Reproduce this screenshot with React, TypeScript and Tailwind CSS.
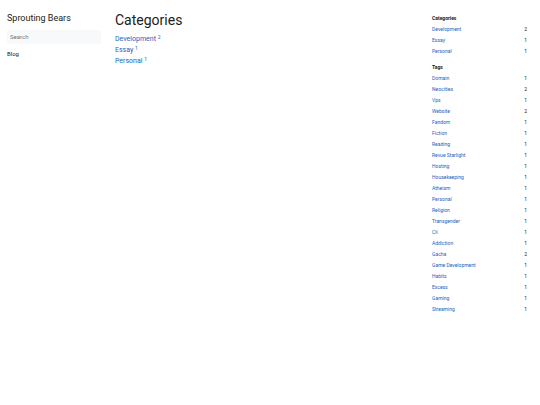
interface Term {
  name: string;
  count: number;
}

const categories: Term[] = [
  { name: "Development", count: 2 },
  { name: "Essay", count: 1 },
  { name: "Personal", count: 1 },
];

const tags: Term[] = [
  { name: "Domain", count: 1 },
  { name: "Neocities", count: 2 },
  { name: "Vps", count: 1 },
  { name: "Website", count: 2 },
  { name: "Fandom", count: 1 },
  { name: "Fiction", count: 1 },
  { name: "Reading", count: 1 },
  { name: "Revue Starlight", count: 1 },
  { name: "Hosting", count: 1 },
  { name: "Housekeeping", count: 1 },
  { name: "Atheism", count: 1 },
  { name: "Personal", count: 1 },
  { name: "Religion", count: 1 },
  { name: "Transgender", count: 1 },
  { name: "Cli", count: 1 },
  { name: "Addiction", count: 1 },
  { name: "Gacha", count: 2 },
  { name: "Game Development", count: 1 },
  { name: "Habits", count: 1 },
  { name: "Excess", count: 1 },
  { name: "Gaming", count: 1 },
  { name: "Streaming", count: 1 },
];

const TermList = ({ title, terms }: { title: string; terms: Term[] }) => (
  <section>
    <h2 className="font-bold">{title}</h2>
    <ul>
      {terms.map((term) => (
        <li key={term.name} className="flex justify-between">
          <a href="#" className="text-[#1565c0] hover:underline">
            {term.name}
          </a>
          <span>{term.count}</span>
        </li>
      ))}
    </ul>
  </section>
);

const App = () => {
  return (
    <div className="flex bg-white font-[Roboto,sans-serif] text-[#212121]">
      {/* Site sidebar */}
      <header className="w-[108px] shrink-0 px-[7px] pt-3">
        <a href="#" className="block text-[9px] leading-[13px]">
          Sprouting Bears
        </a>
        <form role="search" className="mt-[5px]">
          <input
            type="search"
            aria-label="Search"
            placeholder="Search"
            className="block h-[14px] w-full rounded-xs bg-[#f8f9fa] px-[3px] text-[6px] leading-[14px] placeholder:text-[#757575]"
          />
        </form>
        <nav className="mt-1 text-[6px] leading-[12px]">
          <a href="#">Blog</a>
        </nav>
      </header>

      {/* Category index */}
      <main className="min-w-0 flex-1 pl-[7px] pt-3">
        <h1 className="text-[14px] leading-[17px]">Categories</h1>
        <ul className="mt-[5px] text-[7px] leading-[11px]">
          {categories.map((term) => (
            <li key={term.name}>
              <a href="#" className="text-[#1565c0] hover:underline">
                {term.name} <sup className="text-[5px]">{term.count}</sup>
              </a>
            </li>
          ))}
        </ul>
      </main>

      {/* Taxonomy sidebar */}
      <aside className="flex w-[108px] shrink-0 flex-col gap-[5px] pr-[13px] pt-[13px] text-[5px] leading-[11px]">
        <TermList title="Categories" terms={categories} />
        <TermList title="Tags" terms={tags} />
      </aside>
    </div>
  );
};

export default App;
